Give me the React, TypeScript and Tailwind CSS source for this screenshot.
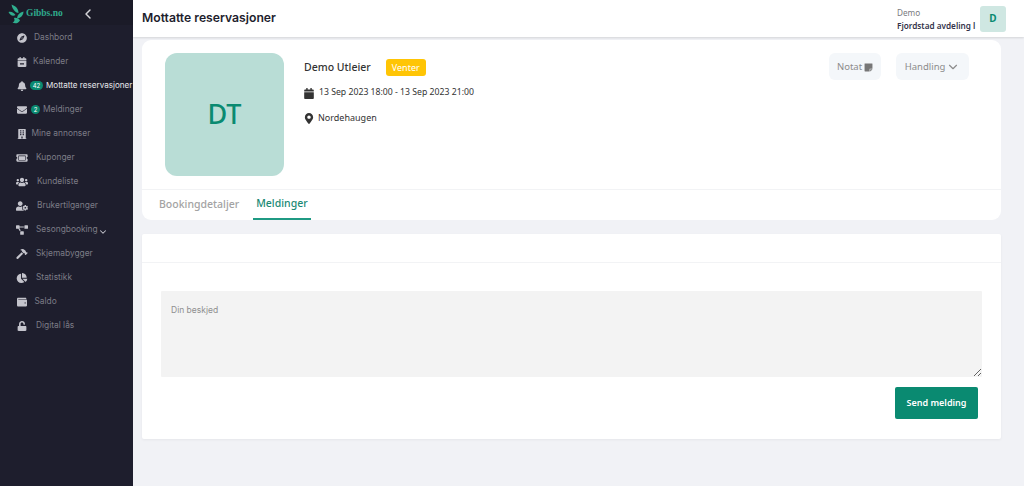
import React from 'react'
import {
  FaCompass,
  FaCalendar,
  FaCalendarMinus,
  FaBell,
  FaEnvelope,
  FaBuilding,
  FaTicketAlt,
  FaUsers,
  FaUserCog,
  FaProjectDiagram,
  FaHammer,
  FaChartPie,
  FaWallet,
  FaUnlock,
  FaMapMarkerAlt,
  FaStickyNote,
} from 'react-icons/fa'
import { ChevronDown, ChevronLeft } from 'lucide-react'

interface NavItem {
  label: string
  icon: React.ReactNode
  textClass: string
  badge?: string
  badgeClass?: string
  active?: boolean
  caret?: boolean
}

const iconClass = 'h-[10px] w-[12px] shrink-0 text-[#c4c4cc]'

const navItems: NavItem[] = [
  { label: 'Dashbord', icon: <FaCompass className={iconClass} />, textClass: 'ml-[6px]' },
  { label: 'Kalender', icon: <FaCalendarMinus className={iconClass} />, textClass: 'ml-[5px]' },
  {
    label: 'Mottatte reservasjoner',
    icon: <FaBell className={iconClass} />,
    textClass: 'ml-[3px] text-[8.1px]',
    badge: '42',
    badgeClass: 'ml-[2px] w-[13px]',
    active: true,
  },
  {
    label: 'Meldinger',
    icon: <FaEnvelope className={iconClass} />,
    textClass: 'ml-[3px]',
    badge: '2',
    badgeClass: 'ml-[3px] w-[9px]',
  },
  { label: 'Mine annonser', icon: <FaBuilding className={iconClass} />, textClass: 'ml-[3.5px]' },
  { label: 'Kuponger', icon: <FaTicketAlt className={iconClass} />, textClass: 'ml-[8px]' },
  { label: 'Kundeliste', icon: <FaUsers className={iconClass} />, textClass: 'ml-[9px]' },
  { label: 'Brukertilganger', icon: <FaUserCog className={iconClass} />, textClass: 'ml-[9px]' },
  { label: 'Sesongbooking', icon: <FaProjectDiagram className={iconClass} />, textClass: 'ml-[8px]', caret: true },
  { label: 'Skjemabygger', icon: <FaHammer className={iconClass} />, textClass: 'ml-[8px]' },
  { label: 'Statistikk', icon: <FaChartPie className={iconClass} />, textClass: 'ml-[8px]' },
  { label: 'Saldo', icon: <FaWallet className={iconClass} />, textClass: 'ml-[6.5px]' },
  { label: 'Digital lås', icon: <FaUnlock className={iconClass} />, textClass: 'ml-[8px]' },
]

const Logo = () => (
  <svg width="16" height="20" viewBox="0 0 16 20" className="shrink-0">
    <path d="M3.5 0.5C8 2 10.5 5 10.5 9C8 9 4.5 6 3.5 0.5Z" fill="#2fae8e" />
    <path d="M0.5 8C3 7 6 8.5 7.5 11C5 12.5 2 11.5 0.5 8Z" fill="#2fae8e" />
    <path d="M15.5 7.5C15.5 11 13 14 9 14.5C9.2 11 11.5 8.5 15.5 7.5Z" fill="#2fae8e" />
    <path d="M6 14C8.5 13.5 11 14.5 12 16.5C10 19.5 7 20 4.5 18.5C6.5 18 7 16 6 14Z" fill="#2fae8e" />
  </svg>
)

const Sidebar = () => (
  <aside className="flex w-[133px] shrink-0 flex-col bg-[#1e1e2d] font-['Inter',sans-serif]">
    <div className="flex h-[25px] shrink-0 items-center bg-[#1b1b28] pl-[8px] pt-[2px]">
      <Logo />
      <span className="ml-[2px] font-['Liberation_Serif',serif] text-[9.5px] font-bold text-[#2fa98c]">Gibbs.no</span>
      <ChevronLeft className="ml-[17px] h-[16px] w-[16px] text-[#d4d4d8]" strokeWidth={2.2} />
    </div>
    <nav className="flex flex-col">
      {navItems.map((item) => (
        <div key={item.label} className="flex h-[24px] items-center pl-[16px] pt-[1px]">
          {item.icon}
          {item.badge && (
            <span
              className={`flex h-[9px] shrink-0 items-center justify-center rounded-full bg-[#0a8a71] text-[6px] text-white ${item.badgeClass}`}
            >
              {item.badge}
            </span>
          )}
          <span
            className={`whitespace-nowrap leading-none ${item.active ? '' : 'text-[8.4px]'} ${item.textClass} ${
              item.active ? 'text-[#e8e8ec]' : 'text-[#7c7c86]'
            }`}
          >
            {item.label}
          </span>
          {item.caret && <ChevronDown className="mt-[4px] h-[10px] w-[10px] text-[#c4c4cc]" strokeWidth={2.5} />}
        </div>
      ))}
    </nav>
  </aside>
)

const Header = () => (
  <header className="flex h-[37px] shrink-0 items-center justify-between bg-white pl-[9px] pr-[18px] shadow-[0_1px_2px_rgba(0,0,0,0.12)]">
    <h1 className="font-['Inter',sans-serif] text-[12.2px] font-semibold text-[#1e1e2d]">Mottatte reservasjoner</h1>
    <div className="flex items-center gap-[3px]">
      <div className="flex w-[80px] flex-col overflow-hidden font-['Noto_Sans',sans-serif] text-[8.2px] leading-[13px]">
        <span className="text-[#7a7a80]">Demo</span>
        <span className="whitespace-nowrap font-semibold text-[#33334a]">Fjordstad avdeling l</span>
      </div>
      <div className="flex h-[26px] w-[26px] items-center justify-center rounded-[3px] bg-[#cfe7e2] font-['Noto_Sans',sans-serif] text-[10px] font-bold text-[#0a8a71]">
        D
      </div>
    </div>
  </header>
)

const BookingCard = () => (
  <section className="rounded-[9px] bg-white">
    <div className="flex h-[150px] border-b border-[#f2f3f5] pl-[23px] pr-[32px] pt-[13px]">
      <div className="flex h-[123px] w-[119px] shrink-0 items-center justify-center rounded-[12px] bg-[#b9ddd6] text-[27px] font-medium text-[#0a8a71]">
        DT
      </div>
      <div className="ml-[20px] flex flex-col text-[#333]">
        <div className="flex h-[29px] items-center">
          <span className="text-[10.5px] font-medium">Demo Utleier</span>
          <span className="ml-[15px] flex h-[17px] w-[40px] items-center justify-center rounded-[3px] bg-[#ffc505] text-[9px] text-white">
            Venter
          </span>
        </div>
        <div className="-mt-[1px] flex h-[24px] items-center text-[8.7px]">
          <FaCalendar className="h-[11px] w-[10px] text-[#333]" />
          <span className="ml-[5px]">13 Sep 2023 18:00 - 13 Sep 2023 21:00</span>
        </div>
        <div className="mt-[1px] flex h-[24px] items-center text-[9px]">
          <FaMapMarkerAlt className="h-[11px] w-[10px] text-[#333]" />
          <span className="ml-[4px]">Nordehaugen</span>
        </div>
      </div>
      <div className="ml-auto flex gap-[15px] text-[9.5px] text-[#8c8c8c]">
        <button className="flex h-[27px] w-[52px] items-center justify-center gap-[2px] rounded-[6px] bg-[#f4f7fa] pt-[1px]">
          Notat
          <FaStickyNote className="h-[9px] w-[9px] text-[#777]" />
        </button>
        <button className="flex h-[27px] w-[73px] items-center justify-center gap-[1px] rounded-[6px] bg-[#f4f7fa] pt-[1px]">
          Handling
          <ChevronDown className="h-[14px] w-[14px]" strokeWidth={2} />
        </button>
      </div>
    </div>
    <div className="flex h-[30px] gap-[14px] pl-[17px] text-[10.5px] font-medium">
      <div className="flex items-center text-[#a3a3a3]">Bookingdetaljer</div>
      <div className="flex items-center border-b-2 border-[#1f9a83] px-[3px] text-[#1a8a75]">Meldinger</div>
    </div>
  </section>
)

const MessageCard = () => (
  <section className="mt-[14px] h-[205px] rounded-[2px] bg-white shadow-[0_1px_3px_rgba(0,0,0,0.05)]">
    <div className="h-[29px] border-b border-[#f2f3f5]" />
    <div className="flex flex-col px-[19px] pt-[28px]">
      <textarea
        placeholder="Din beskjed"
        className="h-[86px] w-full rounded-[1px] bg-[#f3f3f3] px-[10px] pb-[11px] pt-[13px] font-['Inter',sans-serif] text-[8.5px] outline-none placeholder:text-[#8f8f8f]"
      />
      <button className="ml-auto mr-[4px] mt-[10px] flex h-[32px] w-[83px] items-center justify-center rounded-[2px] bg-[#0a8a71] text-[9px] font-semibold text-white">
        Send melding
      </button>
    </div>
  </section>
)

export default function App() {
  return (
    <div className="flex h-[486px] w-[1024px] overflow-hidden bg-[#f1f2f6] font-['Noto_Sans',sans-serif]">
      <Sidebar />
      <div className="flex min-w-0 flex-1 flex-col">
        <Header />
        <main className="pl-[9px] pr-[23px] pt-[3px]">
          <BookingCard />
          <MessageCard />
        </main>
      </div>
    </div>
  )
}
